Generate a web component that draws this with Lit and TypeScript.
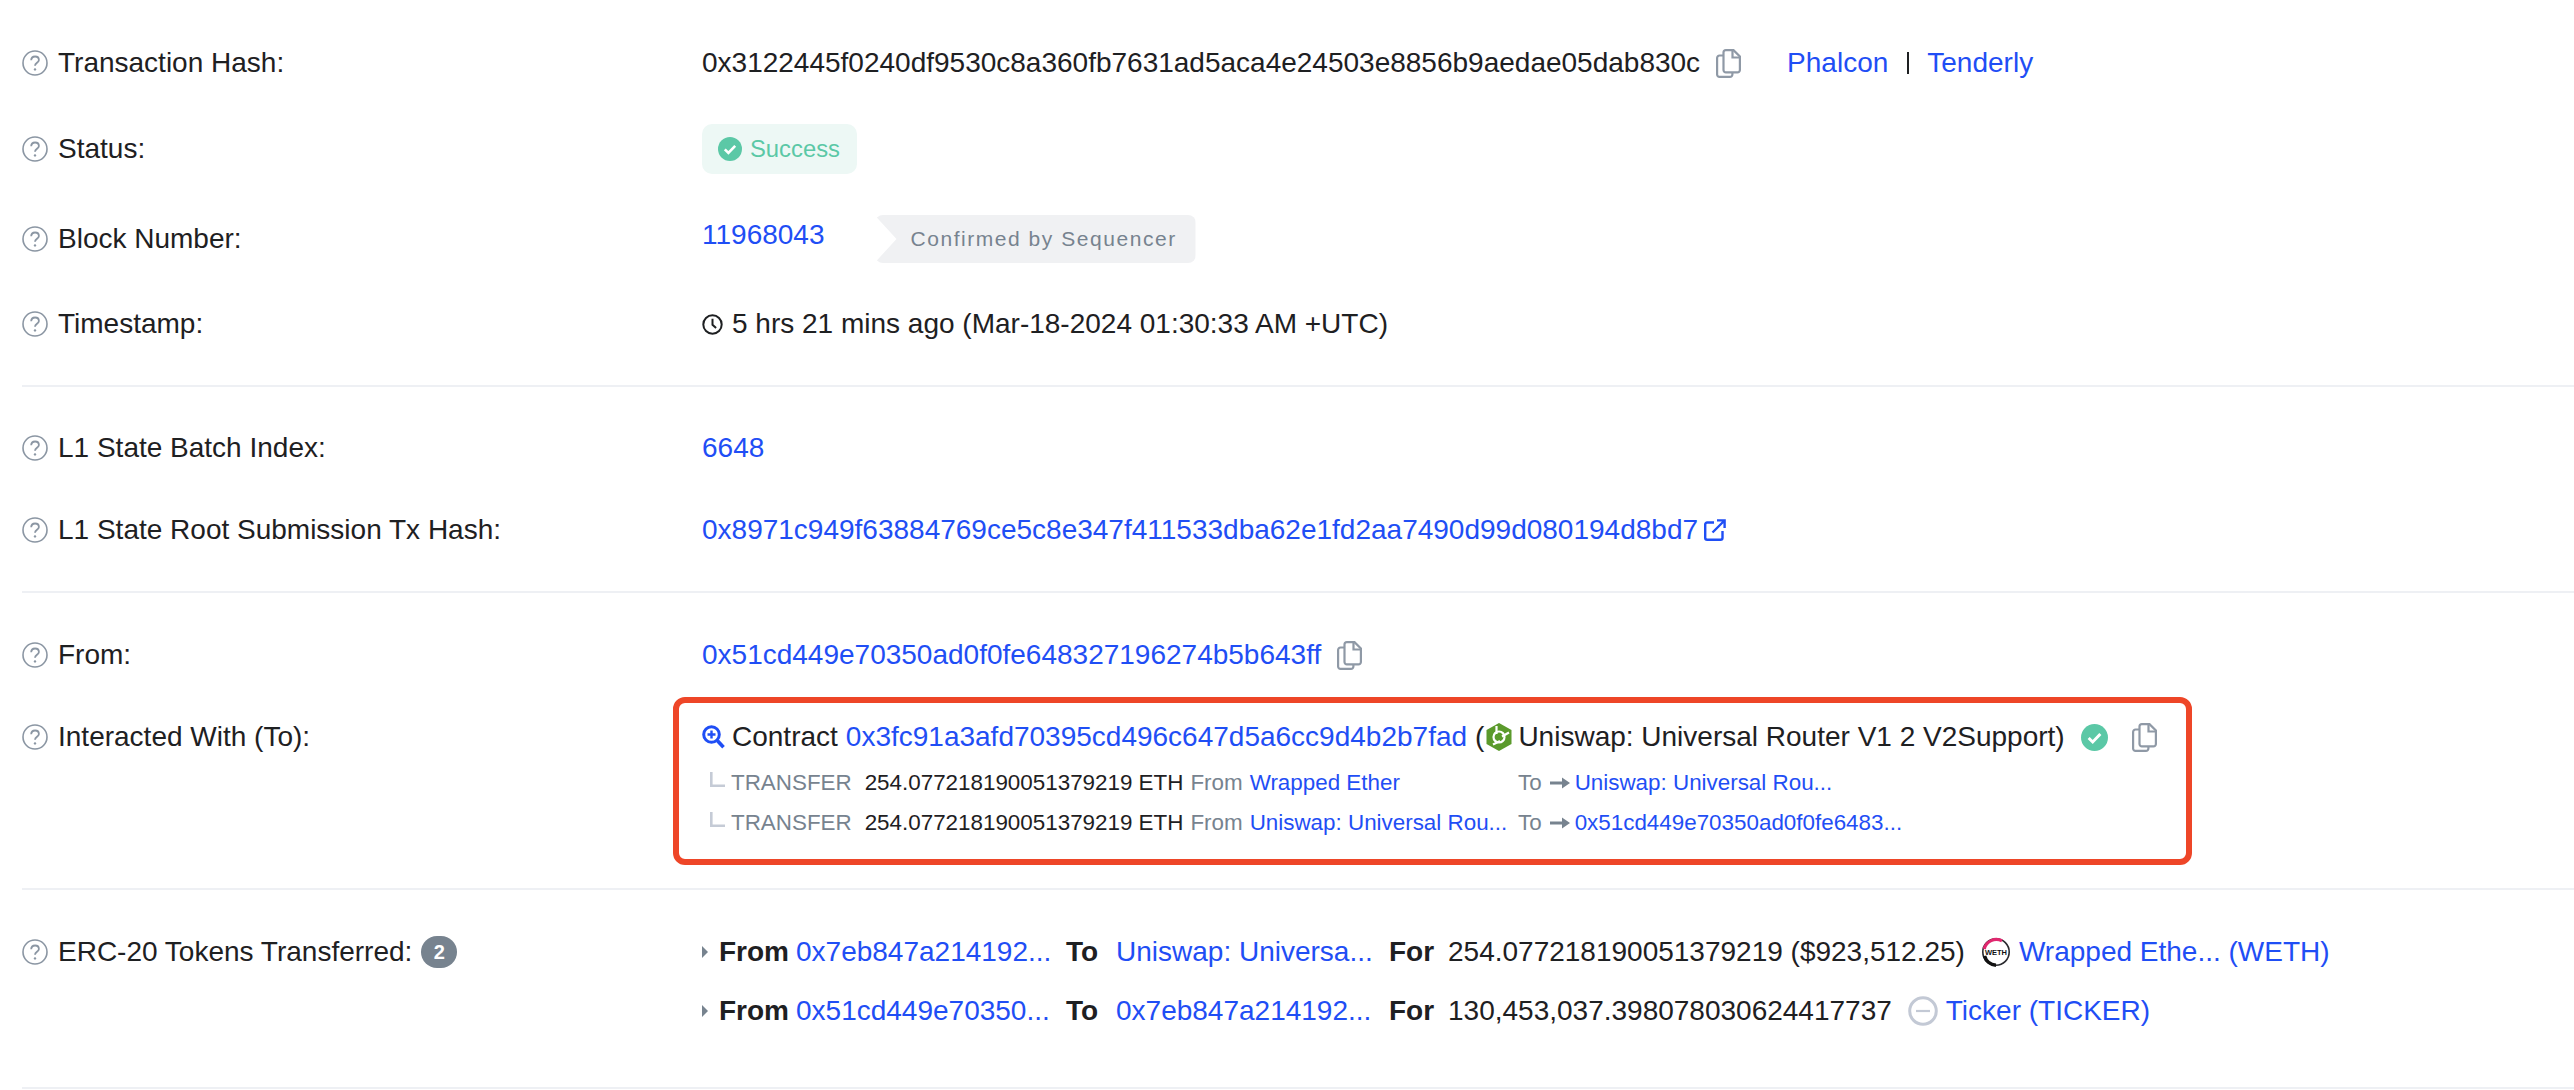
import { LitElement, css, html } from "lit";
import { customElement } from "lit/decorators.js";

const helpIcon = html`<svg class="help" viewBox="0 0 26 26" fill="none" stroke="#8b96a3">
  <circle cx="13" cy="13" r="12" stroke-width="1.6"></circle>
  <path d="M9.2 10.3c0-2.3 1.7-3.8 3.9-3.8s3.8 1.4 3.8 3.4c0 2.8-3.9 2.9-3.9 5.8" stroke-width="1.8"></path>
  <circle cx="13" cy="19.4" r="1.2" fill="#8b96a3" stroke="none"></circle>
</svg>`;

const copyIcon = html`<svg class="copy" viewBox="0 0 25 29" fill="none" stroke="#8f99a6" stroke-width="2.2">
  <path d="M7.5 6.5H3.5a2.4 2.4 0 0 0-2.4 2.4v16.600a2.400 2.400 0 0 0 2.400 2.400h10.500a2.400 2.400 0 0 0 2.400-2.400v-2.500"></path>
  <path d="M7.500 3.500a2.400 2.400 0 0 1 2.400-2.400h7.600l6.400 6.400v13.500a2.400 2.400 0 0 1-2.400 2.400H9.900a2.400 2.400 0 0 1-2.400-2.400z"></path>
  <path d="M16.500 1.100v7.400h7.400"></path>
</svg>`;

const checkCircle = html`<svg viewBox="0 0 24 24">
  <circle cx="12" cy="12" r="12" fill="#5bc8a6"></circle>
  <path d="M6.800 12.400l3.600 3.600 6.800-7.200" fill="none" stroke="#fff" stroke-width="2.600"></path>
</svg>`;

const clockIcon = html`<svg class="clock" viewBox="0 0 21 21" fill="none" stroke="#1e2022" stroke-width="2">
  <circle cx="10.500" cy="10.500" r="9.200"></circle>
  <path d="M10.500 4.800v6l3.600 3.200"></path>
</svg>`;

const externalIcon = html`<svg class="ext" viewBox="0 0 22 22" fill="none" stroke="#1f4ef5" stroke-width="2.400">
  <path d="M10 3.500H3.200a2 2 0 0 0-2 2v13.300a2 2 0 0 0 2 2h13.300a2 2 0 0 0 2-2V12"></path>
  <path d="M8.500 13.500L20 2M13 1.400h7.600V9"></path>
</svg>`;

const searchIcon = html`<svg class="search" viewBox="0 0 23 24" fill="none" stroke="#1f4ef5">
  <circle cx="9.500" cy="9.500" r="7.800" stroke-width="3"></circle>
  <path d="M9.500 5.500v8M5.500 9.500h8" stroke-width="2.400"></path>
  <path d="M15.500 15.800l6 6.400" stroke-width="3.600"></path>
</svg>`;

const routerLogo = html`<svg class="router" viewBox="0 0 26 28">
  <polygon points="13,0 25.500,7 25.500,21 13,28 0.500,21 0.500,7" fill="#5b9a2c"></polygon>
  <g fill="none" stroke="#fff" stroke-width="2.200">
    <circle cx="13" cy="14" r="5.500"></circle>
    <path d="M10.500 3v8M23 9.500l-7 4M7 21.500l7-3.500"></path>
  </g>
</svg>`;

const wethLogo = html`<svg class="token" viewBox="0 0 30 30" fill="none">
  <circle cx="15" cy="15" r="13.200" stroke="#2a2a2e" stroke-width="1.600"></circle>
  <path d="M3.200 12A12.500 12.500 0 0 1 21 3.800" stroke="#e0286f" stroke-width="3.200"></path>
  <path d="M3.500 19A12.800 12.800 0 0 0 15 28.200" stroke="#111" stroke-width="3.600"></path>
  <text x="15" y="17.800" text-anchor="middle" class="weth">WETH</text>
</svg>`;

const tickerLogo = html`<svg class="token" viewBox="0 0 30 30" fill="none" stroke="#c3c9d5">
  <circle cx="15" cy="15" r="13.300" stroke-width="3"></circle>
  <path d="M8 15h14" stroke-width="2.200"></path>
</svg>`;

const elbow = html`<svg class="elbow" viewBox="0 0 15 15" fill="none" stroke="#c5cbd6" stroke-width="2.600">
  <path d="M1.300 0v13.700H15"></path>
</svg>`;

const arrow = html`<svg class="arrow" viewBox="0 0 20 12" fill="#77838f">
  <path d="M0 4.500h12V0.500L20 6l-8 5.500V7.500H0z"></path>
</svg>`;

@customElement("app-root")
export class AppRoot extends LitElement {
  static styles = css`
    :host {
      display: block;
      min-height: 1090px;
      background: #fff;
      overflow: hidden;
      font-family: "Liberation Sans", Arial, sans-serif;
      font-size: 28px;
      color: #1e2022;
    }
    a {
      color: #1f4ef5;
      text-decoration: none;
      white-space: nowrap;
    }
    svg {
      flex: none;
      display: block;
    }
    .section {
      margin-left: 22px;
      border-bottom: 2px solid #eef0f4;
    }
    .s1 {
      padding: 33px 0 31px;
    }
    .s2 {
      padding: 31px 0 31px;
    }
    .s3 {
      padding: 32px 0 45px;
    }
    .s4 {
      padding: 32px 0 47px;
    }
    .row {
      display: flex;
      align-items: center;
      min-height: 60px;
    }
    .row.top {
      align-items: flex-start;
    }
    .mt22 {
      margin-top: 22px;
    }
    .mt25 {
      margin-top: 25px;
    }
    .mt26 {
      margin-top: 26px;
    }
    .mt30 {
      margin-top: 30px;
    }
    .label {
      flex: none;
      width: 680px;
      height: 60px;
      display: flex;
      align-items: center;
      gap: 10px;
      white-space: nowrap;
    }
    .help {
      width: 26px;
      height: 26px;
    }
    .value {
      display: flex;
      align-items: center;
      white-space: nowrap;
    }
    .copy {
      width: 25px;
      height: 29px;
      margin-left: 16px;
    }
    .links {
      display: flex;
      align-items: center;
      margin-left: 46px;
    }
    .sep {
      width: 2px;
      height: 22px;
      margin: 0 18px 0 19px;
      background: #1e2022;
    }
    .badge {
      display: flex;
      align-items: center;
      gap: 8px;
      height: 50px;
      padding: 0 17px 0 16px;
      border-radius: 10px;
      background: #edf8f5;
      color: #5bc8a6;
      font-size: 23.800px;
    }
    .badge svg {
      width: 24px;
      height: 24px;
    }
    .block {
      margin-bottom: 8px;
    }
    .tag {
      width: 321px;
      height: 48px;
      margin-left: 50px;
      padding-left: 36px;
      box-sizing: border-box;
      display: flex;
      align-items: center;
      border-radius: 8px;
      background: #f0f1f3;
      clip-path: polygon(0 0, 100% 0, 100% 100%, 0 100%, 22px 50%);
      color: #77838f;
      font-size: 21px;
      letter-spacing: 1.540px;
    }
    .clock {
      width: 21px;
      height: 21px;
      margin-right: 9px;
    }
    .ext {
      width: 22px;
      height: 22px;
      margin-left: 6px;
    }
    .interact {
      position: relative;
      padding-top: 4px;
    }
    .highlight {
      position: absolute;
      left: -29px;
      top: -10px;
      width: 1519px;
      height: 168px;
      box-sizing: border-box;
      border: 6px solid #ee4628;
      border-radius: 12px;
    }
    .contract {
      height: 52px;
    }
    .search {
      width: 23px;
      height: 24px;
      margin-right: 7px;
    }
    .addr {
      margin-left: 8px;
    }
    .paren {
      margin-left: 8px;
    }
    .router {
      width: 26px;
      height: 28px;
      margin: 0 6px 0 2px;
    }
    .verified {
      width: 27px;
      height: 27px;
      margin-left: 16px;
    }
    .verified svg {
      width: 27px;
      height: 27px;
    }
    .contract .copy {
      margin-left: 24px;
    }
    .sub {
      display: flex;
      align-items: center;
      height: 40px;
      font-size: 22.400px;
    }
    .sub .from {
      flex: none;
      width: 816px;
      display: flex;
      align-items: center;
      padding-left: 8px;
      box-sizing: border-box;
    }
    .muted {
      color: #77838f;
    }
    .elbow {
      width: 15px;
      height: 15px;
      margin: 0 6px 8px 0;
    }
    .sub .amount {
      margin: 0 7px 0 13px;
    }
    .sub .src {
      margin-left: 7px;
    }
    .arrow {
      width: 20px;
      height: 12px;
      margin: 0 5px 0 8px;
    }
    .count {
      display: flex;
      align-items: center;
      justify-content: center;
      width: 36px;
      height: 32px;
      margin-left: -1px;
      border-radius: 16px;
      background: #77838f;
      color: #fff;
      font-size: 20px;
      font-weight: 700;
    }
    .transfer {
      display: flex;
      align-items: center;
      height: 59px;
      white-space: nowrap;
    }
    .caret {
      width: 0;
      height: 0;
      margin-right: 11px;
      border-left: 6px solid #77838f;
      border-top: 6px solid transparent;
      border-bottom: 6px solid transparent;
    }
    b {
      font-weight: 700;
    }
    .k-from {
      width: 77px;
    }
    .k-to {
      width: 50px;
    }
    .k-for {
      width: 59px;
    }
    .w-a {
      width: 270px;
    }
    .w-b {
      width: 273px;
    }
    .token {
      width: 30px;
      height: 30px;
      margin: 0 8px 0 16px;
    }
    .weth {
      font-size: 7.500px;
      font-weight: 700;
      fill: #111;
      stroke: none;
    }
  `;

  renderLabel(text: string) {
    return html`<div class="label">${helpIcon}<span>${text}</span></div>`;
  }

  renderSub(src: string, dest: string) {
    return html`<div class="sub">
      <div class="from">
        ${elbow}
        <span class="muted">TRANSFER</span>
        <span class="amount">254.077218190051379219 ETH</span>
        <span class="muted">From</span>
        <a class="src" href="#">${src}</a>
      </div>
      <span class="muted">To</span>
      ${arrow}
      <a href="#">${dest}</a>
    </div>`;
  }

  renderTransfer(src: string, dest: string, amount: string, logo: unknown, token: string) {
    return html`<div class="transfer">
      <span class="caret"></span>
      <b class="k-from">From</b>
      <a class="w-a" href="#">${src}</a>
      <b class="k-to">To</b>
      <a class="w-b" href="#">${dest}</a>
      <b class="k-for">For</b>
      <span>${amount}</span>
      ${logo}
      <a href="#">${token}</a>
    </div>`;
  }

  render() {
    return html`
      <div class="section s1">
        <div class="row">
          ${this.renderLabel("Transaction Hash:")}
          <div class="value">
            <span>0x3122445f0240df9530c8a360fb7631ad5aca4e24503e8856b9aedae05dab830c</span>
            ${copyIcon}
            <div class="links">
              <a href="#">Phalcon</a>
              <span class="sep"></span>
              <a href="#">Tenderly</a>
            </div>
          </div>
        </div>
        <div class="row mt26">
          ${this.renderLabel("Status:")}
          <div class="badge">${checkCircle}<span>Success</span></div>
        </div>
        <div class="row mt30">
          ${this.renderLabel("Block Number:")}
          <div class="value">
            <a class="block" href="#">11968043</a>
            <div class="tag">Confirmed by Sequencer</div>
          </div>
        </div>
        <div class="row mt25">
          ${this.renderLabel("Timestamp:")}
          <div class="value">${clockIcon}<span>5 hrs 21 mins ago (Mar-18-2024 01:30:33 AM +UTC)</span></div>
        </div>
      </div>

      <div class="section s2">
        <div class="row">
          ${this.renderLabel("L1 State Batch Index:")}
          <div class="value"><a href="#">6648</a></div>
        </div>
        <div class="row mt22">
          ${this.renderLabel("L1 State Root Submission Tx Hash:")}
          <div class="value">
            <a href="#">0x8971c949f63884769ce5c8e347f411533dba62e1fd2aa7490d99d080194d8bd7</a>
            ${externalIcon}
          </div>
        </div>
      </div>

      <div class="section s3">
        <div class="row">
          ${this.renderLabel("From:")}
          <div class="value">
            <a href="#">0x51cd449e70350ad0f0fe648327196274b5b643ff</a>
            ${copyIcon}
          </div>
        </div>
        <div class="row top mt22">
          ${this.renderLabel("Interacted With (To):")}
          <div class="interact">
            <div class="value contract">
              ${searchIcon}
              <span>Contract</span>
              <a class="addr" href="#">0x3fc91a3afd70395cd496c647d5a6cc9d4b2b7fad</a>
              <span class="paren">(</span>
              ${routerLogo}
              <span>Uniswap: Universal Router V1 2 V2Support)</span>
              <span class="verified">${checkCircle}</span>
              ${copyIcon}
            </div>
            ${this.renderSub("Wrapped Ether", "Uniswap: Universal Rou...")}
            ${this.renderSub("Uniswap: Universal Rou...", "0x51cd449e70350ad0f0fe6483...")}
            <div class="highlight"></div>
          </div>
        </div>
      </div>

      <div class="section s4">
        <div class="row top">
          <div class="label">
            ${helpIcon}
            <span>ERC-20 Tokens Transferred:</span>
            <span class="count">2</span>
          </div>
          <div>
            ${this.renderTransfer(
              "0x7eb847a214192...",
              "Uniswap: Universa...",
              "254.077218190051379219 ($923,512.25)",
              wethLogo,
              "Wrapped Ethe... (WETH)"
            )}
            ${this.renderTransfer(
              "0x51cd449e70350...",
              "0x7eb847a214192...",
              "130,453,037.398078030624417737",
              tickerLogo,
              "Ticker (TICKER)"
            )}
          </div>
        </div>
      </div>
    `;
  }
}
